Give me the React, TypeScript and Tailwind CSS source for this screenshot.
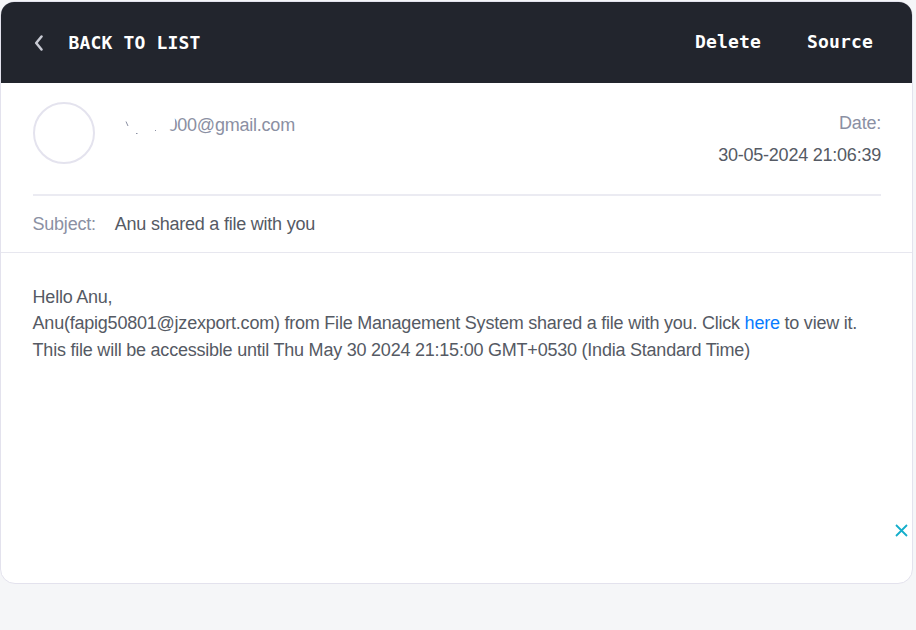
export default function App() {
  return (
    <div className="h-[630px] w-[916px] overflow-hidden bg-[#f5f6f8] pt-px font-['Liberation_Sans',Arial,sans-serif] text-[18px] tracking-[-0.225px] text-[#555a64]">
      <main className="relative h-[583px] w-[913px] rounded-[15px] border border-[#e3e2ed] bg-white">
        <header className="flex h-[81px] items-center justify-between rounded-t-[13px] bg-[#22252d] pl-[33px] pr-[39px] font-['DejaVu_Sans_Mono',monospace] text-[18px] font-bold tracking-[0.163px] text-white">
          <button className="flex items-center">
            <svg className="h-4 w-[10px]" viewBox="0 0 10 16" fill="none" stroke="#c8cad3" strokeWidth="2.5" strokeLinecap="round" strokeLinejoin="round">
              <path d="M7.5 1.5 2.2 8l5.3 6.5" />
            </svg>
            <span className="ml-[24.5px]">BACK TO LIST</span>
          </button>
          <nav className="flex gap-[46px] pb-[2px]">
            <button>Delete</button>
            <button>Source</button>
          </nav>
        </header>
        <section className="ml-8 mr-[31px] flex h-[113px] justify-between border-b-2 border-[#ebebf2] pt-[19px]">
          <div className="flex">
            <div className="h-[62px] w-[62px] rounded-full border-2 border-[#e4e3ee]" />
            <div className="ml-[29px] mt-[10px] flex h-[26px] text-[#8b90a3]">
              <svg className="h-[26px] w-[43.5px]" viewBox="0 0 43.5 26" fill="none" stroke="#8b90a3">
                <path d="m2 9.5 2 4.5" />
                <path d="M12 21.5h1.5M31 18.5h1" />
              </svg>
              <div className="relative leading-[26px]">
                000@gmail.com
                <span className="absolute -left-[5px] -top-[1px] h-[19px] w-[12px] rounded-[50%] bg-white" />
              </div>
            </div>
          </div>
          <div className="pt-[5px] text-right leading-8">
            <p className="text-[#8b90a3]">Date:</p>
            <p>30-05-2024 21:06:39</p>
          </div>
        </section>
        <section className="flex h-[57px] items-center border-b border-[#e7e7ef] pl-[31.5px]">
          <span className="text-[#8b90a3]">Subject:</span>
          <span className="ml-[19px]">Anu shared a file with you</span>
        </section>
        <article className="pl-[31.6px] pt-[30.75px] leading-[26.5px]">
          <p>Hello Anu,</p>
          <p>Anu(fapig50801@jzexport.com) from File Management System shared a file with you. Click <a className="text-[#087cff]">here</a> to view it.</p>
          <p>This file will be accessible until Thu May 30 2024 21:15:00 GMT+0530 (India Standard Time)</p>
        </article>
        <button className="absolute left-[894px] top-[522px]">
          <svg className="h-[13px] w-[13px]" viewBox="0 0 13 13" fill="none" stroke="#14aecb" strokeWidth="1.8">
            <path d="m1 1 11 11M12 1 1 12" />
          </svg>
        </button>
      </main>
    </div>
  );
}
